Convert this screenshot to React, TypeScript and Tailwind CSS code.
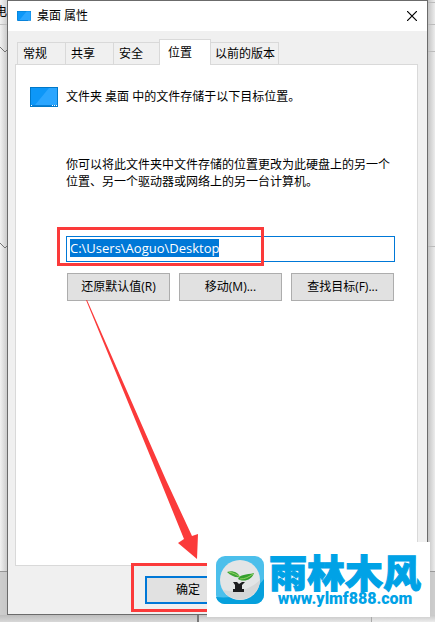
import { useEffect, useRef } from 'react';

const tabs = [
  { label: '常规', active: false },
  { label: '共享', active: false },
  { label: '安全', active: false },
  { label: '位置', active: true },
  { label: '以前的版本', active: false },
];

const actions = ['还原默认值(R)', '移动(M)...', '查找目标(F)...'];

const DesktopIcon = ({ className }: { className: string }) => (
  <svg viewBox="0 0 28 20" preserveAspectRatio="none" className={className} aria-hidden="true">
    <rect width="28" height="20" fill="#0078c8" />
    <rect x="1" y="1" width="26" height="18" fill="#0d97f8" />
    <path d="M19 1h8v17H5z" fill="#2ba6ff" />
    <path d="M1 18h26v1H1z" fill="#0a7fd6" />
    <path d="M1 18h1v1H1zM22 18h1v1h-1zM24 18h1v1h-1zM26 18h1v1h-1z" fill="#fff" />
  </svg>
);

const Chevron = () => (
  <svg viewBox="0 0 7 8" className="h-2 w-[7px]" aria-hidden="true">
    <path d="M0 1l5 5 2-2" fill="none" stroke="#777" />
  </svg>
);

const TitleBar = () => (
  <header className="flex h-[30px] items-center justify-between bg-white pr-[10px] pl-[9px]">
    <div className="flex items-center gap-[6px]">
      <DesktopIcon className="h-[10px] w-[14px]" />
      <h1>桌面 属性</h1>
    </div>
    <button type="button" aria-label="关闭" className="flex items-center">
      <svg viewBox="0 0 10 10" className="size-[10px]" aria-hidden="true">
        <path d="M0 0l10 10M10 0L0 10" stroke="#000" strokeWidth="1.2" />
      </svg>
    </button>
  </header>
);

const TabBar = () => (
  <div role="tablist" className="flex items-end pl-[2px]">
    {tabs.map(({ label, active }) => (
      <button
        key={label}
        type="button"
        role="tab"
        aria-selected={active}
        className={
          active
            ? 'relative -mb-px h-[26px] w-[52px] border border-b-0 border-[#d9d9d9] bg-white pr-[10px]'
            : 'h-[22px] border border-r-0 border-b-0 border-[#d9d9d9] bg-[#f0f0f0] pr-[6px] pl-[5px] text-left whitespace-nowrap first:w-12 last:w-[68px] last:border-r last:border-l-0 last:pr-[3px] last:pl-[4px] nth-2:w-12 nth-3:w-[46px]'
        }
      >
        {label}
      </button>
    ))}
  </div>
);

const LocationPanel = () => {
  const pathRef = useRef<HTMLInputElement>(null);

  useEffect(() => {
    pathRef.current?.focus();
    pathRef.current?.select();
  }, []);

  return (
    <section className="flex-1 border border-[#d9d9d9] bg-white pt-[22px] pr-[22px] pl-[14px]">
      <div className="flex items-center gap-2">
        <DesktopIcon className="h-5 w-7" />
        <p>文件夹 桌面 中的文件存储于以下目标位置。</p>
      </div>

      <div className="pl-9">
        <p className="mt-[49px] leading-[17px]">
          你可以将此文件夹中文件存储的位置更改为此硬盘上的另一个位置、另一个驱动器或网络上的另一台计算机。
        </p>

        {/* Path box with its highlight frame */}
        <div className="relative mt-[46px]">
          <input
            ref={pathRef}
            type="text"
            aria-label="目标位置"
            defaultValue="C:\Users\Aoguo\Desktop"
            className="block h-[26px] w-full border border-[#0078d7] bg-white px-[3px] pb-[3px] text-[13px] outline-none selection:bg-[#0078d7] selection:text-white"
          />
          <div className="pointer-events-none absolute -top-[9px] -left-[9px] h-[39px] w-[207px] border-3 border-[#fb3a3a]" />
        </div>

        <div className="mt-[11px] grid grid-cols-3 gap-[9px] px-px">
          {actions.map((label) => (
            <button key={label} type="button" className="h-7 border border-[#adadad] bg-[#e1e1e1] whitespace-nowrap">
              {label}
            </button>
          ))}
        </div>
      </div>
    </section>
  );
};

const Arrow = () => (
  <svg viewBox="0 0 113 260" className="pointer-events-none absolute top-[300px] left-[86px] h-[260px] w-[113px]" aria-hidden="true">
    <path d="M0 0L1 0L80 180L106 236L112 234L111 259L92 243L98 239L74 180Z" fill="#fb3a3a" />
  </svg>
);

const Watermark = () => (
  <div className="absolute right-[5px] bottom-[5px] flex h-[75px] w-[223px] items-center gap-[5px] bg-white pl-[9px] text-[#00a2e6]">
    <svg viewBox="0 0 48 48" className="size-12 shrink-0" aria-hidden="true">
      <rect width="48" height="48" rx="9" fill="#4cbfeb" />
      <path d="M48 23v16a9 9 0 0 1-9 9H9a9 9 0 0 1-9-7C20 43 38 37 48 23z" fill="#06a0dc" />
      <circle cx="24" cy="24" r="20" fill="#e3e5e6" />
      <path d="M44 24a20 20 0 0 1-37 10c13 3 27 0 37-10z" fill="#d5d7d8" />
      <path d="M11 16c5-2 11 0 13 5-4 1-9-1-13-5z" fill="#3fa535" />
      <path d="M22 23c2-5 8-4 16-6-2 6-8 9-14 7z" fill="#35a02e" />
      <path d="M13 16c4 1 7 2 11 5M24 23c5 0 9-2 13-5" fill="none" stroke="#a9df72" strokeWidth="0.8" />
      <path d="M17 26h4l2 2 3-2h3l-3 3v4h2v3H17v-3h2v-4z" fill="#1d1d1f" />
    </svg>
    <div className="flex flex-col items-center pb-px">
      <span className="font-['Noto_Sans_CJK_SC',sans-serif] text-[38px] leading-10 font-black whitespace-nowrap [-webkit-text-stroke:1px_#00a2e6]">
        雨林木风
      </span>
      <span className="font-[Roboto,sans-serif] text-base leading-4 font-black">www.ylmf888.com</span>
    </div>
  </div>
);

export default function App() {
  return (
    <div className="relative flex min-h-screen flex-col overflow-hidden bg-[#cfcfcf] font-['Open_Sans','Noto_Sans_CJK_SC',sans-serif] text-xs text-black">
      <div className="flex flex-1">
        {/* Edge of the window behind, left */}
        <div className="mb-[43px] w-[7px] shrink-0 overflow-hidden border-b border-[#999] bg-linear-to-r from-[#f3f3f3] to-[#d4d4d4]">
          <div className="flex h-[25px] items-center justify-end border-b border-[#c4c4c4]">电</div>
          <div className="mt-[21px]">
            <Chevron />
          </div>
          <div className="mt-[188px]">
            <Chevron />
          </div>
        </div>

        <main className="flex flex-1 flex-col border border-[#6b6b6b] bg-[#f0f0f0] shadow-lg">
          <TitleBar />
          <div className="flex flex-1 flex-col pt-[8px] pr-[9px] pl-[7px]">
            <TabBar />
            <LocationPanel />
          </div>
          <footer className="flex h-12 items-center pl-[137px]">
            <div className="relative">
              <button type="button" className="h-7 w-[86px] border-2 border-[#0078d7] bg-[#e1e1e1]">
                确定
              </button>
              <div className="pointer-events-none absolute -top-[13px] -left-[14px] h-[49px] w-[114px] border-3 border-[#fb3a3a]" />
            </div>
          </footer>
        </main>

        {/* Edge of the window behind, right */}
        <div className="mb-[43px] w-[7px] shrink-0 border-b border-[#999] bg-linear-to-r from-[#c4c4c4] to-[#ececec]">
          <div className="h-[3px] border-b border-[#bbb]" />
          <div className="h-[22px] border-b border-[#bbb]" />
          <div className="h-[27px] border-b border-[#bbb]" />
          <div className="h-[195px] border-b border-[#bbb]" />
        </div>
      </div>

      <div className="flex h-[7px]">
        <div className="w-[199px] shrink-0 border-r-2 border-[#777] bg-linear-to-b from-[#bdbdbd] to-[#d8d8d8]" />
        <div className="w-[173px] shrink-0 border-r border-[#aaa] bg-linear-to-b from-[#c4c4c4] to-[#e6e6e6]" />
        <div className="flex-1 bg-linear-to-b from-[#c8c8c8] to-[#ececec]" />
      </div>

      <Arrow />
      <Watermark />
    </div>
  );
}
